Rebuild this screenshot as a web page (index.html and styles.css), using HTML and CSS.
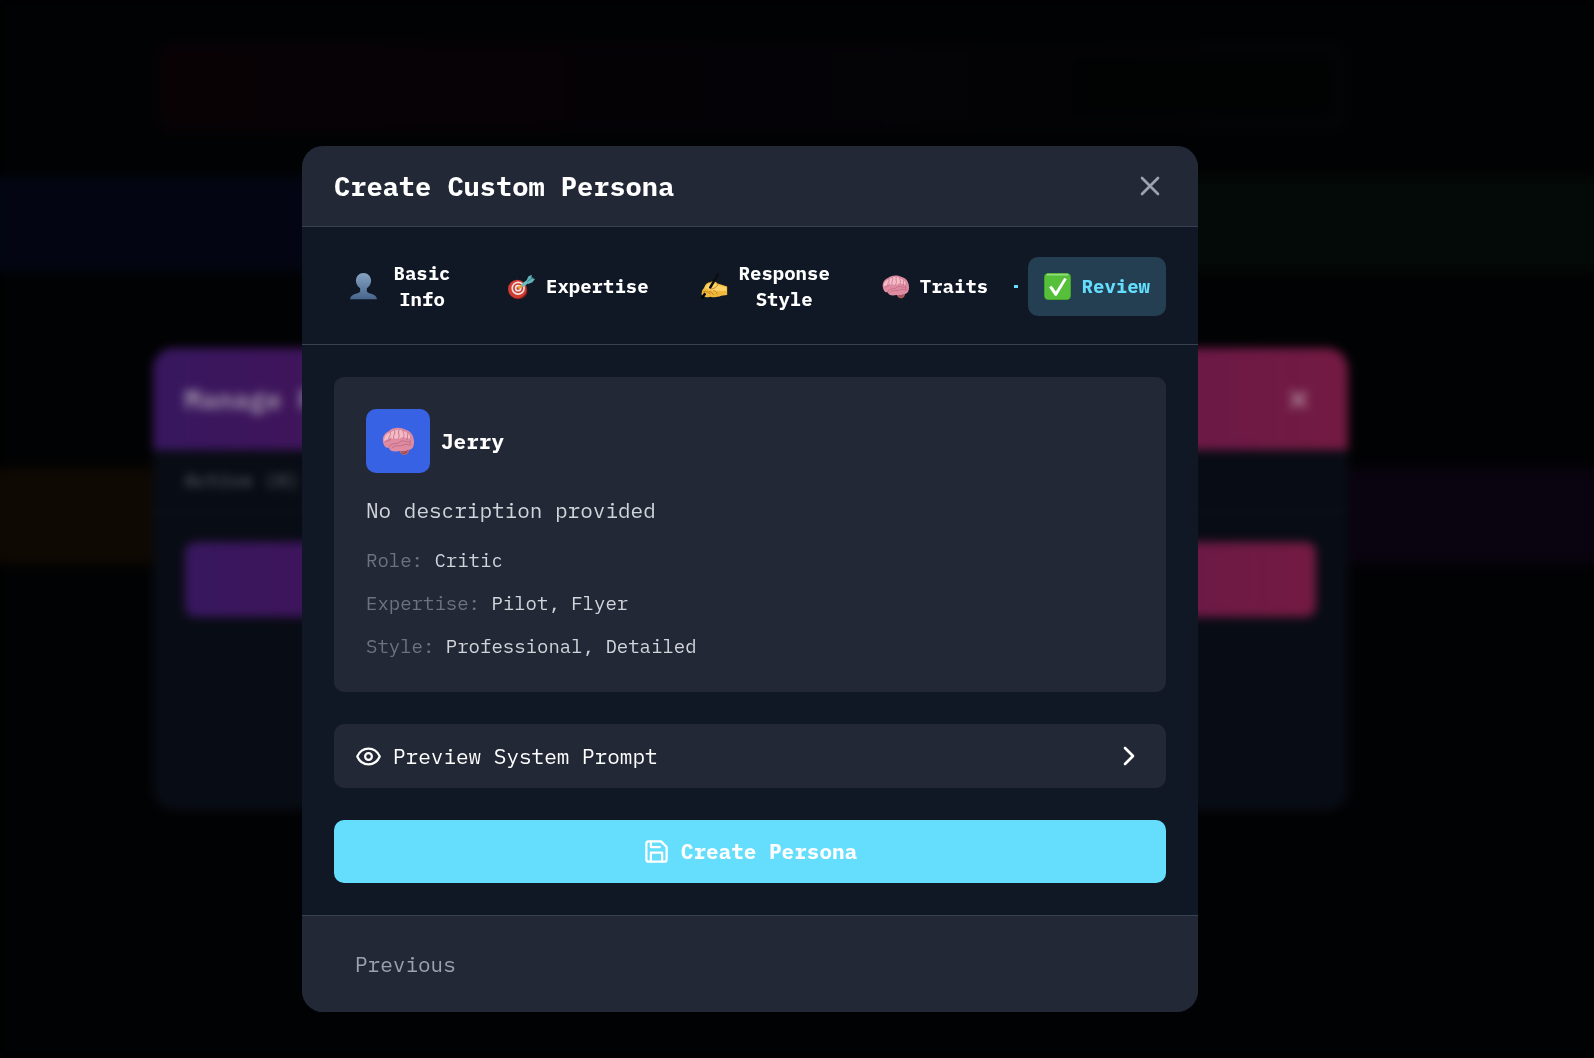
FILE: index.html
```html
<!DOCTYPE html>
<html lang="en">
<head>
    <meta charset="UTF-8">
    <title>Create Custom Persona</title>
    <link rel="stylesheet" href="styles.css">
</head>
<body>
    <!-- Shared artwork -->
    <svg class="sprite" aria-hidden="true">
        <symbol id="brain" viewBox="0 0 32 32">
            <path d="M17 25c0-3 8-4 10-1 1 3-2 6-5 6-2 0-4-2-5-5z" fill="#b9656a"/>
            <path d="M19 26c2 1 5 1 7-1M20 28c2 1 4 0 5-1" fill="none" stroke="#8f434c" stroke-width="1"/>
            <path d="M2 20C-1 14 2 8 7 6c4-4 12-4 17-1 5 1 8 6 8 12 0 5-2 8-6 8-3 2-6 1-9 1-4 1-9 1-10-3-3 0-4-1-5-3z" fill="#df8ba2"/>
            <path d="M2 16c0-5 3-8 7-9 4-3 10-3 14 0 3 1 6 4 6 8-4-3-9-3-12-1-5 0-10-1-15 2z" fill="#f4bac6"/>
            <g fill="none" stroke="#bb667f" stroke-width="1" stroke-linecap="round" opacity="0.8">
                <path d="M3 17c2-2 5 0 6-4M8 7c2 3-2 4-1 8M12 5c3 3-2 5 0 9M17 5c-2 3 2 5-1 9M21 5c-1 3 3 4 0 8M26 8c-2 2 1 4-1 7M29 12c-2 2 0 4-1 7"/>
                <path d="M7 22c2-5 7-2 11-5 3-3 6 1 10 0M10 23c3-4 7-1 11-3 3-2 5 1 8 0"/>
            </g>
        </symbol>
    </svg>

    <!-- Page behind the dialogs -->
    <div class="page" aria-hidden="true">
        <div class="banner"><div class="banner-action"></div></div>
        <div class="bands first">
            <div class="band blue"></div>
            <div class="band green"></div>
        </div>
        <div class="bands">
            <div class="band orange"></div>
            <div class="band purple"></div>
        </div>
    </div>

    <div class="overlay" aria-hidden="true">
        <div class="manage">
            <div class="manage-header">
                <h2>Manage Personas</h2>
                <svg class="icon-md" viewBox="0 0 24 24"><path d="M18 6 6 18M6 6l12 12"/></svg>
            </div>
            <div class="manage-tabs">Active (0)</div>
            <div class="manage-body">
                <div class="manage-create"></div>
            </div>
        </div>
    </div>

    <div class="overlay">
        <div class="modal" role="dialog" aria-labelledby="modalTitle">
            <header class="modal-header">
                <h2 id="modalTitle">Create Custom Persona</h2>
                <button type="button" class="close" aria-label="Close">
                    <svg class="icon-lg" viewBox="0 0 24 24"><path d="M18 6 6 18M6 6l12 12"/></svg>
                </button>
            </header>

            <nav class="steps">
                <button type="button" class="step">
                    <svg class="emoji" viewBox="0 0 32 32">
                        <defs>
                            <linearGradient id="bust" x1="0" y1="0" x2="0" y2="1">
                                <stop offset="0" stop-color="#86a3c3"/>
                                <stop offset="1" stop-color="#48658d"/>
                            </linearGradient>
                        </defs>
                        <path d="M16 0c5 0 9 4 9 9 0 4-2 7-5 9v4c1 3 11 2 12 9H0c1-7 11-6 12-9v-4c-3-2-5-5-5-9 0-5 4-9 9-9z" fill="url(#bust)"/>
                    </svg>
                    <span class="step-label">Basic<br>Info</span>
                </button>
                <span class="line"></span>
                <button type="button" class="step">
                    <svg class="emoji" viewBox="0 0 32 32">
                        <ellipse cx="12" cy="21" rx="11" ry="10" fill="#8c1f1b"/>
                        <ellipse cx="11" cy="19" rx="11" ry="11" fill="#cf3a31"/>
                        <circle cx="12" cy="18" r="7" fill="none" stroke="#f1e4e0" stroke-width="2"/>
                        <circle cx="12" cy="18" r="3" fill="none" stroke="#f1e4e0" stroke-width="2"/>
                        <path d="M12 18 18 14" stroke="#dfa737" stroke-width="3"/>
                        <path d="M17 15 26 8" stroke="#69bdc2" stroke-width="4"/>
                        <path d="M22 9 24 4 28 2 28 6 32 7 29 11 24 13z" fill="#63b1b8"/>
                        <path d="M23 10 30 5" stroke="#347b82" stroke-width="1"/>
                    </svg>
                    <span class="step-label">Expertise</span>
                </button>
                <span class="line"></span>
                <button type="button" class="step">
                    <svg class="emoji" viewBox="0 0 32 32">
                        <path d="M1 23c0-3 2-4 3-6 1-4 4-6 7-6 3-2 6-1 8 1l12 4v10l-7 1c-5 2-9 2-13 1-4 1-7 1-8-1-2 0-3-2-2-4z" fill="#f1b93c"/>
                        <path d="M4 18c2-4 5-6 8-6 3-1 5 0 7 2l11 3v4c-5 1-9-1-12 1-5 0-9-4-14-4z" fill="#fdd368"/>
                        <path d="M3 22c4-1 6 1 8 3M10 22c2 0 4 2 5 4M15 21c2 0 4 1 4 4M20 14c-2 3-5 5-8 5" fill="none" stroke="#b9741e" stroke-width="1" stroke-linecap="round"/>
                        <path d="M20 2 11 17" stroke="#0c0d0f" stroke-width="3" stroke-linecap="round"/>
                        <path d="M5 24 1 30" stroke="#030405" stroke-width="3"/>
                    </svg>
                    <span class="step-label">Response<br>Style</span>
                </button>
                <span class="line"></span>
                <button type="button" class="step">
                    <svg class="emoji"><use href="#brain"/></svg>
                    <span class="step-label">Traits</span>
                </button>
                <span class="line done"></span>
                <button type="button" class="step active" aria-current="step">
                    <svg class="emoji" viewBox="0 0 32 32">
                        <rect width="32" height="32" rx="5" fill="#3f9f2c"/>
                        <rect x="1" y="1" width="30" height="30" rx="4" fill="#56c03a"/>
                        <path d="M4 2h24" stroke="#93df7c" stroke-width="2" stroke-linecap="round"/>
                        <path d="M6 17 9 15 14 22 24 6 27 7 15 27 13 27z" fill="#fff"/>
                    </svg>
                    <span class="step-label">Review</span>
                </button>
            </nav>

            <main class="modal-body">
                <section class="card">
                    <div class="persona">
                        <div class="avatar"><svg class="avatar-icon"><use href="#brain"/></svg></div>
                        <h3>Jerry</h3>
                    </div>
                    <p class="description">No description provided</p>
                    <div class="details">
                        <div><span class="key">Role:</span> Critic</div>
                        <div><span class="key">Expertise:</span> Pilot, Flyer</div>
                        <div><span class="key">Style:</span> Professional, Detailed</div>
                    </div>
                </section>

                <button type="button" class="preview" aria-expanded="false">
                    <svg class="icon-md" viewBox="0 0 24 24">
                        <path d="M2 12C4 7.500 7.500 5 12 5s8 2.500 10 7c-2 4.500-5.500 7-10 7s-8-2.500-10-7z"/>
                        <circle cx="12" cy="12" r="3"/>
                    </svg>
                    <span>Preview System Prompt</span>
                    <svg class="icon-lg chevron" viewBox="0 0 24 24"><path d="m9 18 6-6-6-6"/></svg>
                </button>

                <button type="button" class="create">
                    <svg class="icon-md" viewBox="0 0 24 24">
                        <path d="M19 21H5a2 2 0 0 1-2-2V5a2 2 0 0 1 2-2h11l5 5v11a2 2 0 0 1-2 2z"/>
                        <path d="M17 21v-8H7v8M7 3v5h8"/>
                    </svg>
                    Create Persona
                </button>
            </main>

            <footer class="modal-footer">
                <button type="button" class="previous">Previous</button>
            </footer>
        </div>
    </div>
</body>
</html>
```

FILE: styles.css
```css
* {
    box-sizing: border-box;
}
body {
    margin: 0;
    background: #010203;
    color: #fff;
    font-family: "IBM Plex Mono", "Liberation Mono", monospace;
    font-size: 21px;
    line-height: 32px;
    overflow: hidden;
}
h2, h3, p {
    margin: 0;
}
h2 {
    font-size: 27px;
}
h3 {
    font-size: 21px;
}
button {
    border: none;
    background: none;
    color: inherit;
    font: inherit;
    padding: 0;
    cursor: pointer;
}
svg {
    display: block;
    flex-shrink: 0;
}
.sprite {
    position: absolute;
    width: 0;
    height: 0;
}
.icon-md, .icon-lg {
    width: 27px;
    height: 27px;
    fill: none;
    stroke: currentColor;
    stroke-width: 2;
    stroke-linecap: round;
    stroke-linejoin: round;
}
.icon-lg {
    width: 32px;
    height: 32px;
}

/* page */
.page {
    min-height: 100vh;
    padding-top: 42px;
}
.banner {
    display: flex;
    justify-content: flex-end;
    max-width: 1191px;
    height: 90px;
    margin-left: 157px;
    padding: 16px;
    border-radius: 16px;
    background: linear-gradient(90deg, #080205, #040206 50%, #020406);
}
.banner-action {
    width: 260px;
    border-radius: 10px;
    background: #010202;
}
.bands {
    display: grid;
    grid-template-columns: 1fr 1fr;
    margin-top: 196px;
}
.bands.first {
    margin-top: 44px;
}
.band {
    height: 96px;
}
.blue {
    background: #030612;
}
.green {
    background: #040a07;
}
.orange {
    background: #0f0903;
}
.purple {
    background: #0a0310;
}

.overlay {
    position: fixed;
    inset: 0;
    display: flex;
    align-items: center;
    justify-content: center;
    padding: 100px 94px 0 0;
    backdrop-filter: blur(5px);
}
.manage {
    width: 100%;
    max-width: 1195px;
    min-height: 462px;
    border-radius: 21px;
    background: #080c14;
    overflow: hidden;
}
.manage-header {
    display: flex;
    align-items: center;
    justify-content: space-between;
    padding: 35px 32px;
    background: linear-gradient(90deg, #38175f, #40145a 15%, #731a42);
    color: #9a8aa5;
}
.manage-header svg {
    margin-right: 4px;
    color: #b28da0;
    stroke-width: 3;
}
.manage-tabs {
    padding: 14px 32px;
    border-bottom: 2px solid #0d1219;
    color: #444a52;
    font-size: 19px;
    font-weight: bold;
}
.manage-body {
    padding: 30px 32px;
}
.manage-create {
    height: 75px;
    border-radius: 10px;
    background: linear-gradient(90deg, #38175f, #40145a 15%, #731a42);
}

.modal {
    width: 100%;
    max-width: 896px;
    border-radius: 21px;
    background: #111825;
    overflow: hidden;
}
.modal-header {
    display: flex;
    align-items: center;
    justify-content: space-between;
    padding: 24px 32px;
    background: #222835;
    border-bottom: 1px solid #374151;
}
.close {
    color: #9ca3af;
}

/* steps */
.steps {
    display: flex;
    align-items: center;
    padding: 22px 32px 21px;
    border-bottom: 1px solid #374151;
}
.step {
    display: flex;
    align-items: center;
    gap: 11px;
    padding: 11px 16px;
    border-radius: 10px;
    font-size: 19px;
    font-weight: bold;
    line-height: 26px;
}
.step.active {
    padding: 16px;
    background: #243e52;
    color: #65defd;
}
.step-label {
    min-width: 68px;
}
.emoji {
    width: 27px;
    height: 27px;
}
.line {
    height: 3px;
    margin: 0 10px;
}
.line.done {
    flex: 1;
    background: #65defd;
}

/* review */
.modal-body {
    display: flex;
    flex-direction: column;
    gap: 32px;
    padding: 32px;
}
.card {
    padding: 32px;
    border-radius: 10px;
    background: #222835;
}
.persona {
    display: flex;
    align-items: center;
    gap: 11px;
    margin-bottom: 21px;
}
.avatar {
    display: grid;
    place-items: center;
    width: 64px;
    height: 64px;
    border-radius: 10px;
    background: #3862e4;
}
.avatar-icon {
    width: 32px;
    height: 32px;
}
.description {
    margin-bottom: 21px;
    color: #d1d5db;
}
.details {
    display: flex;
    flex-direction: column;
    gap: 16px;
    color: #d1d5db;
    font-size: 19px;
    line-height: 27px;
}
.key {
    color: #6b7280;
}
.preview {
    display: flex;
    align-items: center;
    gap: 11px;
    padding: 16px 21px;
    border-radius: 10px;
    background: #222835;
}
.chevron {
    margin-left: auto;
}
.create {
    display: flex;
    align-items: center;
    justify-content: center;
    gap: 11px;
    padding: 16px;
    border-radius: 10px;
    background: #65defd;
    font-weight: bold;
    line-height: 31px;
}
.modal-footer {
    padding: 32px;
    background: #222835;
    border-top: 1px solid #374151;
}
.previous {
    padding: 0 21px;
    color: #9ca3af;
}
```
